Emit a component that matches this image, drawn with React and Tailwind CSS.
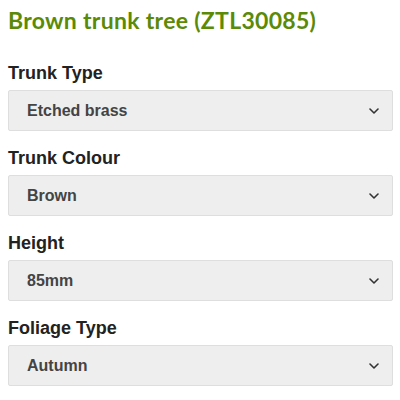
import React from "react";

const fields = [
  { label: "Trunk Type", value: "Etched brass" },
  { label: "Trunk Colour", value: "Brown" },
  { label: "Height", value: "85mm" },
  { label: "Foliage Type", value: "Autumn" },
];

function Chevron() {
  return (
    <svg width="10" height="6" viewBox="0 0 10 6" fill="none" className="shrink-0">
      <path d="M1 1 L5 5 L9 1" stroke="#333" strokeWidth="1.6" strokeLinecap="round" strokeLinejoin="round" />
    </svg>
  );
}

export default function App() {
  return (
    <div className="w-[400px] h-[400px] bg-white px-2 font-['Liberation_Sans',Arial,sans-serif]">
      <h1 className="pt-[5px] text-[23px] leading-[30px] font-bold tracking-[0.3px] text-[#5b8a06] font-['Lato',sans-serif]">
        Brown trunk tree (ZTL30085)
      </h1>
      <div className="mt-[27px] flex flex-col gap-[16px] w-[385px]">
        {fields.map((f) => (
          <div key={f.label} className="flex flex-col gap-[6px]">
            <div className="text-[18px] leading-[22px] font-bold text-[#222]">{f.label}</div>
            <div className="h-[41px] flex items-center justify-between rounded-[2px] border border-[#dedede] bg-[#eeeeee] pl-[18px] pr-[13px]">
              <span className="text-[16px] font-bold text-[#444]">{f.value}</span>
              <Chevron />
            </div>
          </div>
        ))}
      </div>
    </div>
  );
}
